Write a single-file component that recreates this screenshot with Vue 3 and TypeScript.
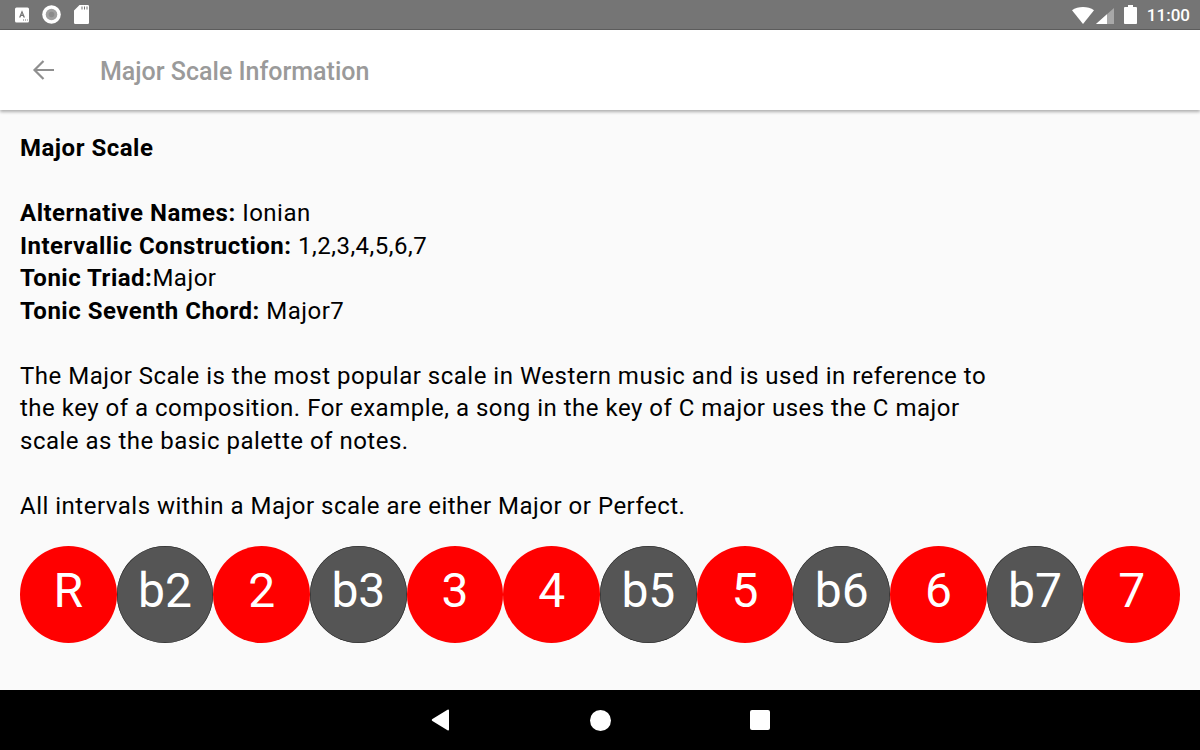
<script setup lang="ts">
interface Note { label: string; active: boolean }
const notes: Note[] = [
  { label: 'R', active: true }, { label: 'b2', active: false }, { label: '2', active: true },
  { label: 'b3', active: false }, { label: '3', active: true }, { label: '4', active: true },
  { label: 'b5', active: false }, { label: '5', active: true }, { label: 'b6', active: false },
  { label: '6', active: true }, { label: 'b7', active: false }, { label: '7', active: true },
]
</script>

<template>
  <div class="screen">
    <header class="status">
      <div class="status-left">
        <svg class="si" width="14" height="16" viewBox="0 0 14 16">
          <rect x="0" y="0.500" width="14" height="15" rx="1.500" fill="#fff" />
          <path d="M7 3.200 4 10.500h1.500l.6-1.600h1.800l.6 1.600H10L7 3.200Zm-.5 4.500L7 6.100l.5 1.600Z" fill="#757575" />
          <path d="M8 13h1M10 13h1M12 13h.8" stroke="#757575" stroke-width="1" />
        </svg>
        <svg class="si" width="19" height="19" viewBox="0 0 19 19">
          <circle cx="9.500" cy="9.500" r="9.300" fill="#fff" />
          <circle cx="9.500" cy="9.500" r="5.800" fill="#a0a0a0" />
          <circle cx="9.500" cy="9.500" r="2.800" fill="#8c8c8c" />
        </svg>
        <svg class="si" width="15" height="19" viewBox="0 0 15 19">
          <path d="M5.500 0h8.300A1.200 1.200 0 0 1 15 1.200v16.600a1.200 1.200 0 0 1-1.200 1.200H1.200A1.200 1.200 0 0 1 0 17.800V5.500Z" fill="#fff" />
          <path d="M7.500 1.500h1v3h-1ZM10 1.500h1v3h-1ZM12.500 1.500h1v3h-1Z" fill="#757575" />
        </svg>
      </div>
      <div class="status-right">
        <svg class="wifi" width="22" height="17" viewBox="0 0 22 17"><path d="M0 3.300C3 1.100 7 0 11 0s8 1.100 11 3.300L11 17Z" fill="#fff" /></svg>
        <svg class="signal" width="18" height="16" viewBox="0 0 18 16">
          <path d="M18 0v16H0Z" fill="#a8a8a8" /><path d="M11 6.200V16H0Z" fill="#fff" />
        </svg>
        <svg class="batt" width="13" height="19" viewBox="0 0 13 19">
          <path d="M4 0h5v2h2.900c.6 0 1.100.5 1.100 1.100v14.800c0 .6-.5 1.100-1.100 1.100H1.100C.5 19 0 18.500 0 17.900V3.100C0 2.500.5 2 1.100 2H4Z" fill="#fff" />
        </svg>
        <span class="time">11:00</span>
      </div>
    </header>

    <nav class="appbar">
      <svg class="back" width="24" height="24" viewBox="0 0 24 24">
        <path d="M22 12H3M11.500 3 2.500 12l9 9" fill="none" stroke="#8f8f8f" stroke-width="2.200" />
      </svg>
      <h1 class="title">Major Scale Information</h1>
    </nav>

    <main class="content">
      <section class="text">
        <p><b>Major Scale</b></p>
        <p>
          <b>Alternative Names:</b> Ionian<br />
          <b>Intervallic Construction:</b> 1,2,3,4,5,6,7<br />
          <b>Tonic Triad:</b>Major<br />
          <b>Tonic Seventh Chord:</b> Major7
        </p>
        <p>The Major Scale is the most popular scale in Western music and is used in reference to the key of a composition. For example, a song in the key of C major uses the C major scale as the basic palette of notes.</p>
        <p>All intervals within a Major scale are either Major or Perfect.</p>
      </section>
      <div class="notes">
        <div v-for="n in notes" :key="n.label" class="note" :class="n.active ? 'on' : 'off'">{{ n.label }}</div>
      </div>
    </main>

    <footer class="navbar">
      <svg width="20" height="22" viewBox="0 0 20 22"><path d="M18 1.500v19a1 1 0 0 1-1.500.8L1.400 12a1.100 1.100 0 0 1 0-2L16.500.7a1 1 0 0 1 1.500.8Z" fill="#fff" /></svg>
      <span class="home"></span>
      <span class="recent"></span>
    </footer>
  </div>
</template>

<style scoped>
.screen {
  width: 1200px;
  height: 750px;
  display: flex;
  flex-direction: column;
  overflow: hidden;
  background: #fafafa;
  font-family: Roboto, "Liberation Sans", sans-serif;
}
.status {
  height: 29px;
  flex: none;
  background: #757575;
  border-bottom: 1px solid #5e5e5e;
  display: flex;
  align-items: center;
  justify-content: space-between;
  padding: 0 10px 0 15px;
}
.status-left, .status-right { display: flex; align-items: center; }
.status-left { gap: 13px; }
.si { display: block; }
.wifi { margin: 2px 0 0 -1px; }
.signal { margin: 2px 0 0 2px; }
.batt { margin-left: 10px; }
.time { margin-left: 10px; color: #fff; font-size: 17px; font-weight: 500; }
.appbar {
  height: 80px;
  flex: none;
  background: #fff;
  display: flex;
  align-items: center;
  padding-left: 32px;
  box-shadow: 0 2px 3px rgba(0, 0, 0, .3);
  position: relative;
}
.title {
  margin: 2px 0 0 44px;
  font-size: 25px;
  font-weight: 500;
  color: #9a9a9a;
}
.content { flex: 1; padding: 22.4px 20px 0; min-height: 0; }
.text { width: 975px; font-size: 24px; line-height: 32.5px; letter-spacing: .5px; color: #000; }
.text p { margin: 0 0 32.5px; }
.text p:last-child { margin-bottom: 0; }
.text b { font-weight: 700; }
.notes { display: flex; margin-top: 23.6px; }
.note {
  flex: 1;
  aspect-ratio: 1;
  border-radius: 50%;
  display: flex;
  align-items: center;
  justify-content: center;
  padding-bottom: 7px;
  box-sizing: border-box;
  color: #fff;
  font-size: 48px;
}
.on { background: #f00; }
.off { background: #555; box-shadow: inset 0 0 0 .5px #222; }
.navbar {
  height: 60px;
  flex: none;
  background: #000;
  display: flex;
  align-items: center;
  justify-content: center;
  gap: 139px;
}
.home { width: 21px; height: 21px; border-radius: 50%; background: #fff; }
.recent { width: 20px; height: 20px; border-radius: 2px; background: #fff; }
</style>
